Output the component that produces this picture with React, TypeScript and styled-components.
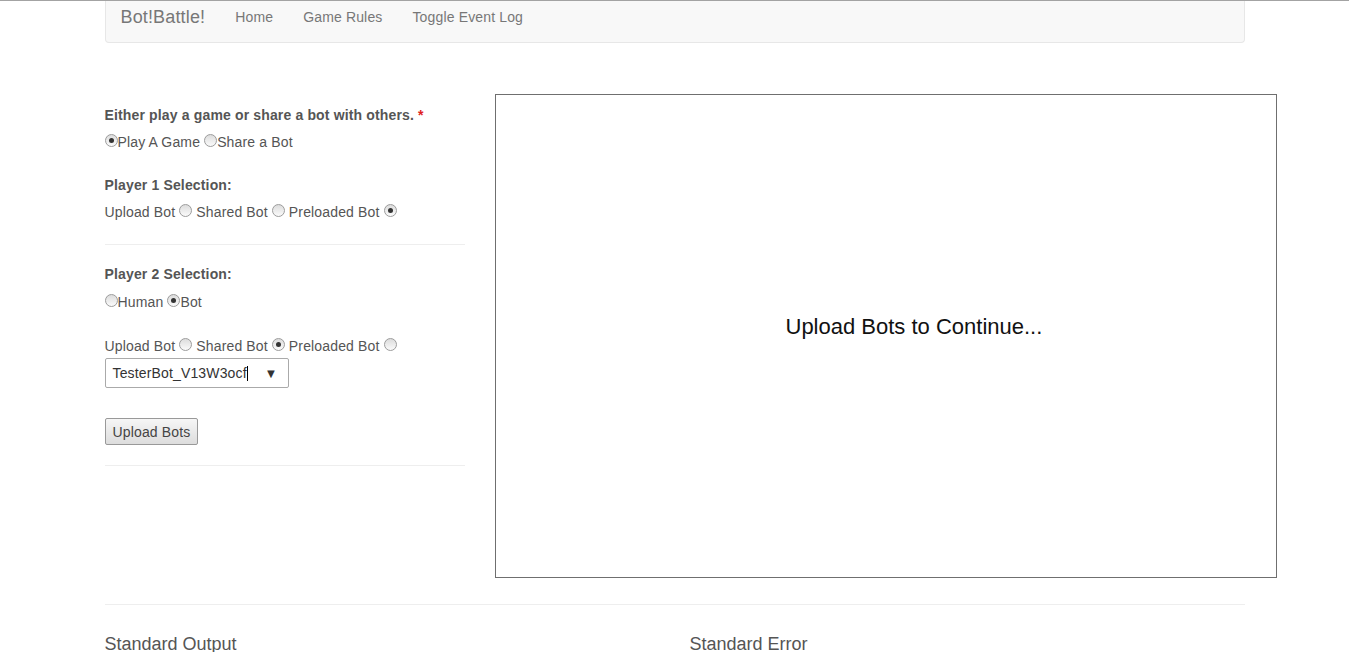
import React from 'react';
import styled, { createGlobalStyle } from 'styled-components';

const GlobalStyle = createGlobalStyle`
  html, body {
    margin: 0;
    padding: 0;
    background: #fff;
  }
  body {
    border-top: 1px solid #a3a3a3;
    font-family: "Liberation Sans", Arial, sans-serif;
    font-size: 14px;
    letter-spacing: 0.15px;
    color: #555;
  }
`;

const Container = styled.div`
  width: 1140px;
  margin: 0 auto;
`;

const Navbar = styled.nav`
  display: flex;
  align-items: flex-start;
  height: 35px;
  padding-top: 6px;
  padding-left: 15px;
  background: #f8f8f8;
  border: 1px solid #e7e7e7;
  border-top: none;
  border-radius: 0 0 4px 4px;
`;

const Brand = styled.span`
  font-size: 18px;
  line-height: 20px;
  color: #777;
  padding-right: 15px;
`;

const NavLink = styled.a`
  font-size: 14px;
  line-height: 20px;
  color: #777;
  text-decoration: none;
  padding: 0 15px;
`;

const Main = styled.div`
  display: flex;
  gap: 30px;
  margin-top: 51px;
`;

const LeftCol = styled.div`
  width: 360px;
  flex-shrink: 0;
  padding-top: 11px;
`;

const Label = styled.div<{ $mt?: number }>`
  font-weight: bold;
  line-height: 20px;
  margin-top: ${(p) => p.$mt ?? 0}px;
`;

const Required = styled.span`
  color: #e02020;
  margin-left: 4px;
`;

const Row = styled.div<{ $mt?: number }>`
  display: flex;
  align-items: center;
  line-height: 20px;
  margin-top: ${(p) => p.$mt ?? 0}px;
`;

const Radio = styled.span<{ $checked?: boolean; $ml?: number; $mr?: number }>`
  position: relative;
  display: inline-block;
  box-sizing: border-box;
  width: 13px;
  height: 13px;
  border-radius: 50%;
  border: 1px solid #9c9c9c;
  background: linear-gradient(#dcdcdc, #fbfbfb);
  margin-left: ${(p) => p.$ml ?? 0}px;
  margin-right: ${(p) => p.$mr ?? 0}px;
  margin-top: -3px;

  &::after {
    content: '';
    display: ${(p) => (p.$checked ? 'block' : 'none')};
    position: absolute;
    left: 3px;
    top: 3px;
    width: 5px;
    height: 5px;
    border-radius: 50%;
    background: #333;
  }
`;

const Rule = styled.hr<{ $mt: number }>`
  border: none;
  border-top: 1px solid #eee;
  margin: ${(p) => p.$mt}px 0 0;
`;

const Select = styled.div`
  display: flex;
  align-items: center;
  justify-content: space-between;
  box-sizing: border-box;
  width: 184px;
  height: 30px;
  margin-top: 2px;
  padding: 0 10px 0 7px;
  border: 1px solid #aaa;
  border-radius: 2px;
  color: #333;
`;

const Cursor = styled.span`
  display: inline-block;
  width: 1px;
  height: 15px;
  background: #000;
  vertical-align: -3px;
`;

const Caret = styled.span`
  font-size: 13px;
  color: #333;
`;

const Button = styled.button`
  display: block;
  margin-top: 30px;
  height: 27px;
  padding: 0 7px;
  font-family: "Liberation Sans", Arial, sans-serif;
  font-size: 14px;
  letter-spacing: 0.15px;
  color: #444;
  border: 1px solid #999;
  border-radius: 2px;
  background: linear-gradient(#f6f6f6, #dddddd);
`;

const Stage = styled.div`
  box-sizing: border-box;
  width: 782px;
  height: 484px;
  flex-shrink: 0;
  border: 1px solid #6f6f6f;
  padding: 219px 0 0 290px;
`;

const StageText = styled.div`
  font-size: 22px;
  line-height: 26px;
  letter-spacing: 0;
  color: #111;
`;

const Footer = styled.div`
  margin-top: 26px;
  border-top: 1px solid #eee;
  display: grid;
  grid-template-columns: 1fr 1fr;
  gap: 30px;
  padding-top: 27px;
`;

const Heading = styled.h3`
  margin: 0;
  font-size: 18px;
  font-weight: normal;
  line-height: 24px;
  letter-spacing: 0;
  color: #555;
`;

export default function App() {
  return (
    <>
      <GlobalStyle />
      <Container>
        <Navbar>
          <Brand>Bot!Battle!</Brand>
          <NavLink href="#">Home</NavLink>
          <NavLink href="#">Game Rules</NavLink>
          <NavLink href="#">Toggle Event Log</NavLink>
        </Navbar>
      </Container>
      <Container>
        <Main>
          <LeftCol>
            <Label>
              Either play a game or share a bot with others.<Required>*</Required>
            </Label>
            <Row $mt={7}>
              <Radio $checked />
              Play A Game&nbsp;
              <Radio />
              Share a Bot
            </Row>

            <Label $mt={23}>Player 1 Selection:</Label>
            <Row $mt={7}>
              Upload Bot
              <Radio $ml={4} $mr={4} />
              Shared Bot
              <Radio $ml={4} $mr={4} />
              Preloaded Bot
              <Radio $ml={4} $checked />
            </Row>
            <Rule $mt={22} />

            <Label $mt={19}>Player 2 Selection:</Label>
            <Row $mt={8}>
              <Radio />
              Human&nbsp;
              <Radio $checked />
              Bot
            </Row>
            <Row $mt={24}>
              Upload Bot
              <Radio $ml={4} $mr={4} />
              Shared Bot
              <Radio $ml={4} $mr={4} $checked />
              Preloaded Bot
              <Radio $ml={4} />
            </Row>
            <Select>
              <span>
                TesterBot_V13W3ocf
                <Cursor />
              </span>
              <Caret>▼</Caret>
            </Select>
            <Button>Upload Bots</Button>
            <Rule $mt={20} />
          </LeftCol>
          <Stage>
            <StageText>Upload Bots to Continue...</StageText>
          </Stage>
        </Main>
        <Footer>
          <Heading>Standard Output</Heading>
          <Heading>Standard Error</Heading>
        </Footer>
      </Container>
    </>
  );
}
